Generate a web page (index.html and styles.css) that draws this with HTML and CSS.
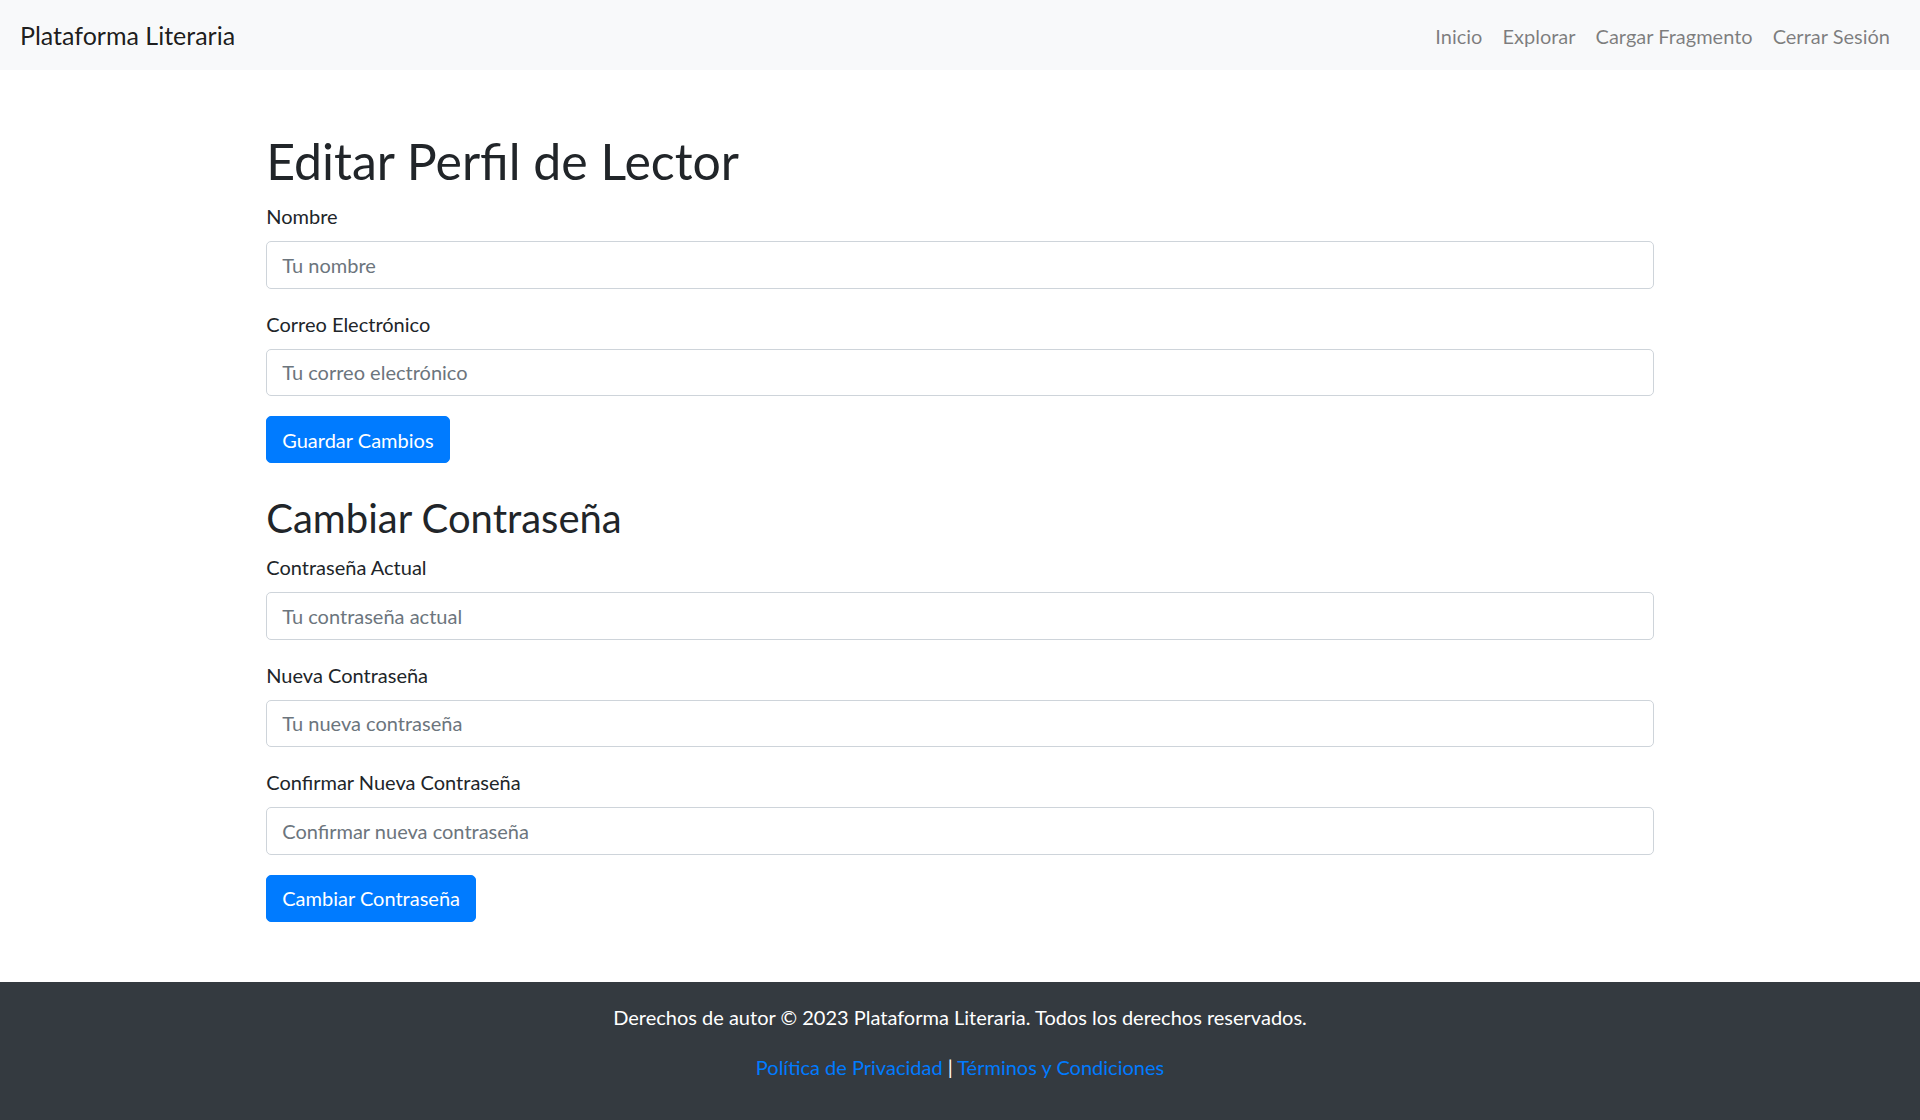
FILE: index.html
```html
<!DOCTYPE html>
<html lang="es">
<head>
<meta charset="utf-8">
<title>Editar Perfil de Lector</title>
<link rel="stylesheet" href="styles.css">
</head>
<body>
<nav class="navbar">
  <a class="brand" href="#">Plataforma Literaria</a>
  <ul class="nav">
    <li><a href="#">Inicio</a></li>
    <li><a href="#">Explorar</a></li>
    <li><a href="#">Cargar Fragmento</a></li>
    <li><a href="#">Cerrar Sesión</a></li>
  </ul>
</nav>
<main class="container">
  <h1>Editar Perfil de Lector</h1>
  <form>
    <div class="form-group">
      <label for="nombre">Nombre</label>
      <input id="nombre" class="form-control" type="text" placeholder="Tu nombre">
    </div>
    <div class="form-group">
      <label for="correo">Correo Electrónico</label>
      <input id="correo" class="form-control" type="email" placeholder="Tu correo electrónico">
    </div>
    <button type="button" class="btn">Guardar Cambios</button>
  </form>
  <h2>Cambiar Contraseña</h2>
  <form>
    <div class="form-group">
      <label for="actual">Contraseña Actual</label>
      <input id="actual" class="form-control" type="password" placeholder="Tu contraseña actual">
    </div>
    <div class="form-group">
      <label for="nueva">Nueva Contraseña</label>
      <input id="nueva" class="form-control" type="password" placeholder="Tu nueva contraseña">
    </div>
    <div class="form-group">
      <label for="confirmar">Confirmar Nueva Contraseña</label>
      <input id="confirmar" class="form-control" type="password" placeholder="Confirmar nueva contraseña">
    </div>
    <button type="button" class="btn">Cambiar Contraseña</button>
  </form>
</main>
<footer class="footer">
  <p>Derechos de autor © 2023 Plataforma Literaria. Todos los derechos reservados.</p>
  <p><a href="#">Política de Privacidad</a> | <a href="#">Términos y Condiciones</a></p>
</footer>
</body>
</html>
```
FILE: styles.css
```css
* { box-sizing: border-box; }
html, body { margin: 0; }
body {
  font-family: "Lato", "Noto Sans", sans-serif;
  font-size: 20px;
  line-height: 1.5;
  color: #212529;
  background: #fff;
}
a { text-decoration: none; }
.navbar {
  display: flex;
  justify-content: space-between;
  align-items: center;
  background: #f8f9fa;
  padding: 11px 20px 9px;
}
.brand {
  font-size: 25px;
  line-height: 37.5px;
  padding: 6.25px 0;
  color: rgba(0,0,0,.9);
  margin-right: 20px;
}
.nav {
  display: flex;
  list-style: none;
  margin: 0;
  padding: 0;
}
.nav a {
  display: block;
  padding: 10px;
  color: rgba(0,0,0,.5);
}
.container {
  width: 1425px;
  padding: 0 18.75px;
  margin: 61px auto 60px;
}
h1 {
  font-size: 50px;
  font-weight: 400;
  line-height: 1.2;
  margin: 0 0 10px;
}
h2 {
  font-size: 40px;
  font-weight: 400;
  line-height: 1.2;
  margin: 31px 0 10px;
}
form { margin: 0; }
.form-group { margin-bottom: 20px; }
label {
  display: inline-block;
  margin-bottom: 10px;
}
.form-control {
  display: block;
  width: 100%;
  height: 47.5px;
  padding: 7.5px 15px;
  font: inherit;
  color: #495057;
  background: #fff;
  border: 1.25px solid #ced4da;
  border-radius: 5px;
}
.form-control::placeholder { color: #6c757d; opacity: 1; }
.btn {
  display: inline-block;
  font: inherit;
  color: #fff;
  background: #007bff;
  border: 1.25px solid #007bff;
  border-radius: 5px;
  padding: 7.5px 15px;
  line-height: 1.5;
}
.footer {
  background: #343a40;
  color: #fff;
  text-align: center;
  padding: 20px 0;
}
.footer p { margin: 0 0 20px; }
.footer a { color: #007bff; }
```
